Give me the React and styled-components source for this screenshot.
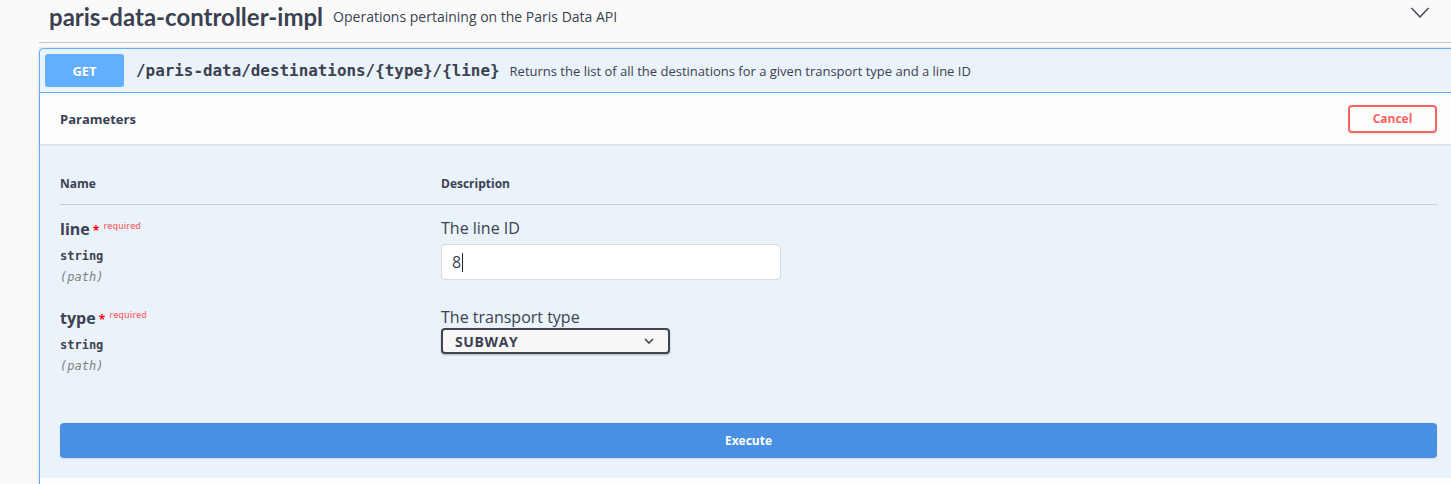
import styled, { createGlobalStyle } from "styled-components";

const GlobalStyle = createGlobalStyle`
  html, body {
    margin: 0;
    background: #fafafa;
    overflow: hidden;
    font-family: "Open Sans", "Noto Sans", sans-serif;
    color: #3b4151;
  }
  * {
    box-sizing: border-box;
  }
`;

const params = [
  { name: "line", type: "string", place: "path", label: "The line ID", kind: "text", value: "8" },
  { name: "type", type: "string", place: "path", label: "The transport type", kind: "select", value: "SUBWAY" },
];

const App = () => {
  return (
    <>
      <GlobalStyle />
      <Page>
        <TagHeader>
          <TagTitle>paris-data-controller-impl</TagTitle>
          <TagDesc>Operations pertaining on the Paris Data API</TagDesc>
          <svg width="20" height="20" viewBox="0 0 20 20">
            <polyline points="1.5,2 10,11 18.5,2" fill="none" stroke="#3b4151" strokeWidth="1.4" />
          </svg>
        </TagHeader>

        <OpBlock>
          <Summary>
            <MethodBadge>GET</MethodBadge>
            <SummaryPath>/paris-data/destinations/{"{type}"}/{"{line}"}</SummaryPath>
            <SummaryDesc>
              Returns the list of all the destinations for a given transport type and a line ID
            </SummaryDesc>
          </Summary>

          <SectionHeader>
            <SectionTitle>Parameters</SectionTitle>
            <CancelButton>Cancel</CancelButton>
          </SectionHeader>

          <OpBody>
            <HeadRow>
              <span>Name</span>
              <span>Description</span>
            </HeadRow>

            {params.map((p) => (
              <ParamRow key={p.name}>
                <div>
                  <ParamName>
                    {p.name}
                    <Star>&nbsp;*</Star>
                    <Required>required</Required>
                  </ParamName>
                  <ParamType>{p.type}</ParamType>
                  <ParamIn>({p.place})</ParamIn>
                </div>
                <div>
                  <ParamLabel>{p.label}</ParamLabel>
                  {p.kind === "text" ? (
                    <TextField role="textbox">
                      {p.value}
                      <Caret />
                    </TextField>
                  ) : (
                    <SelectField>
                      <span>{p.value}</span>
                      <svg width="10" height="6" viewBox="0 0 10 6">
                        <polyline points="1,1 5,5 9,1" fill="none" stroke="#41444e" strokeWidth="1.6" />
                      </svg>
                    </SelectField>
                  )}
                </div>
              </ParamRow>
            ))}

            <ExecuteButton>Execute</ExecuteButton>
          </OpBody>

          {/* 응답 영역 시작 부분 */}
          <ResponsesStrip />
        </OpBlock>
      </Page>
    </>
  );
};

const Page = styled.div`
  width: 1458px;
  padding-left: 39px;
`;

// 태그 제목 줄
const TagHeader = styled.h3`
  display: flex;
  align-items: center;
  height: 43px;
  margin: 0;
  padding: 0 28px 10px 10px;
  border-bottom: 1px solid rgba(59, 65, 81, 0.3);
`;

const TagTitle = styled.span`
  font-family: Lato, "Open Sans", sans-serif;
  font-size: 24px;
  font-weight: 700;
  color: #3b4151;
`;

const TagDesc = styled.small`
  flex: 1;
  padding: 0 10px;
  font-size: 14px;
  font-weight: 400;
  color: #3b4151;
`;

const OpBlock = styled.div`
  margin-top: 5px;
  border: 1px solid #61affe;
  border-radius: 4px;
  background: rgba(97, 175, 254, 0.1);
  box-shadow: 0 0 3px rgba(0, 0, 0, 0.19);
`;

const Summary = styled.div`
  display: flex;
  align-items: center;
  padding: 5px;
  border-bottom: 1px solid #61affe;
`;

const MethodBadge = styled.span`
  display: flex;
  align-items: center;
  justify-content: center;
  min-width: 79px;
  height: 33px;
  border-radius: 3px;
  background: #61affe;
  color: #fff;
  font-size: 13px;
  font-weight: 700;
  text-shadow: 0 1px 0 rgba(0, 0, 0, 0.1);
`;

const SummaryPath = styled.span`
  margin-left: 12px;
  font-family: "DejaVu Sans Mono", monospace;
  font-size: 15.9px;
  font-weight: 600;
  color: #3b4151;
`;

const SummaryDesc = styled.span`
  margin-left: 10px;
  font-size: 13px;
  color: #3b4151;
`;

const SectionHeader = styled.div`
  display: flex;
  align-items: center;
  justify-content: space-between;
  min-height: 51px;
  padding: 8px 20px;
  background: rgba(255, 255, 255, 0.8);
  box-shadow: 0 1px 2px rgba(0, 0, 0, 0.1);
`;

const SectionTitle = styled.h4`
  margin: 0;
  font-size: 13px;
  font-weight: 700;
  color: #3b4151;
`;

const CancelButton = styled.button`
  width: 89px;
  height: 28px;
  border: 2px solid #ff6060;
  border-radius: 4px;
  background: transparent;
  color: #ff6060;
  font-family: "Open Sans", sans-serif;
  font-size: 12px;
  font-weight: 700;
  box-shadow: 0 1px 2px rgba(0, 0, 0, 0.1);
  cursor: pointer;
`;

const OpBody = styled.div`
  padding: 20px;
`;

const HeadRow = styled.div`
  display: grid;
  grid-template-columns: 381px 1fr;
  padding: 12px 0;
  border-bottom: 1px solid rgba(59, 65, 81, 0.2);
  font-size: 12px;
  line-height: 16px;
  font-weight: 700;
`;

const ParamRow = styled.div`
  display: grid;
  grid-template-columns: 381px 1fr;
  padding: 13px 0 8px;
`;

const ParamName = styled.div`
  height: 22px;
  font-size: 16px;
  line-height: 22px;
  font-weight: 700;
`;

const Star = styled.span`
  color: red;
  font-size: 12px;
  line-height: 0;
  font-weight: 700;
`;

const Required = styled.span`
  margin-left: 4px;
  vertical-align: 6px;
  font-size: 9px;
  line-height: 0;
  font-weight: 600;
  color: rgba(255, 0, 0, 0.6);
`;

const ParamType = styled.div`
  margin-top: 8px;
  font-family: "DejaVu Sans Mono", monospace;
  font-size: 12px;
  line-height: 17px;
  font-weight: 600;
`;

const ParamIn = styled.div`
  margin-top: 4px;
  font-family: "DejaVu Sans Mono", monospace;
  font-size: 12px;
  line-height: 17px;
  font-style: italic;
  color: gray;
`;

const ParamLabel = styled.div`
  margin-top: -1px;
  font-size: 16px;
  line-height: 22px;
`;

const TextField = styled.div`
  display: flex;
  align-items: center;
  width: 340px;
  height: 36px;
  margin-top: 5px;
  padding: 0 10px;
  border: 1px solid #d9d9d9;
  border-radius: 4px;
  background: #fff;
  font-size: 16px;
  color: #3b4151;
`;

const Caret = styled.span`
  width: 1px;
  height: 19px;
  margin-left: 1px;
  background: #222;
`;

const SelectField = styled.div`
  display: flex;
  align-items: center;
  justify-content: space-between;
  width: 229px;
  height: 26px;
  padding: 0 14px 0 12px;
  border: 2px solid #41444e;
  border-radius: 4px;
  background: #f7f7f7;
  box-shadow: 0 1px 2px 0 rgba(0, 0, 0, 0.25);
  font-size: 14px;
  font-weight: 700;
  letter-spacing: 0.6px;
  color: #3b4151;
`;

const ExecuteButton = styled.button`
  display: block;
  width: 100%;
  height: 35px;
  margin-top: 40px;
  border: none;
  border-radius: 4px;
  background: #4990e2;
  color: #fff;
  font-family: "Open Sans", sans-serif;
  font-size: 12px;
  font-weight: 700;
  box-shadow: 0 1px 2px rgba(0, 0, 0, 0.1);
  cursor: pointer;
`;

const ResponsesStrip = styled.div`
  min-height: 50px;
  background: rgba(255, 255, 255, 0.8);
  box-shadow: 0 1px 2px rgba(0, 0, 0, 0.1);
`;

export default App;
